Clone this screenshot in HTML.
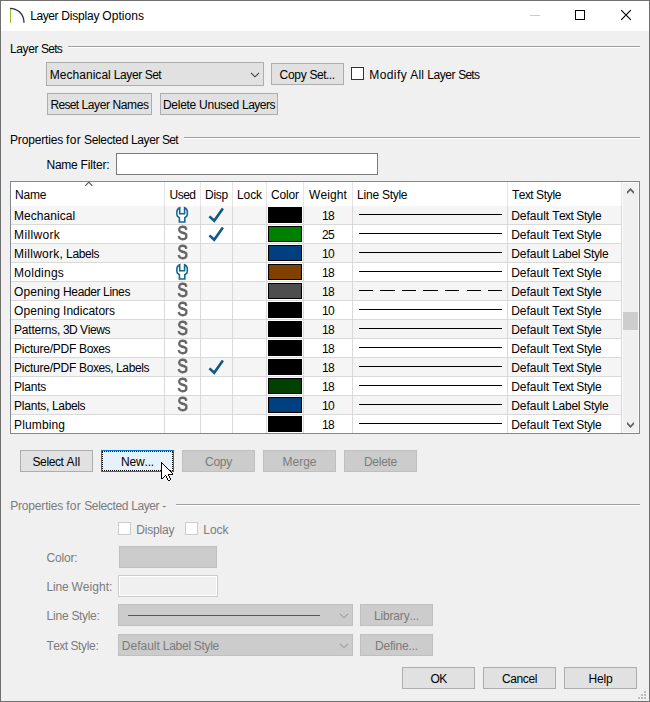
<!DOCTYPE html>
<html lang="en"><head><meta charset="utf-8"><title>Layer Display Options</title>
<style>
*{box-sizing:border-box;margin:0;padding:0}
html,body{width:650px;height:702px;overflow:hidden;background:#f0f0f0}
body{font-family:"Liberation Sans",sans-serif;font-size:12px;color:#000;line-height:15px;font-kerning:none}
#win{position:absolute;left:0;top:0;width:650px;height:702px;background:#f0f0f0;overflow:hidden}
#win>*{position:absolute}
#bt,#bb{left:0;width:650px;height:1px;background:#707070}
#bt{top:0}#bb{top:701px}
#bl,#br{top:0;width:1px;height:702px;background:#707070}
#bl{left:0}#br{left:649px}
#titlebar{left:0;top:0;width:650px;height:31px;background:#fff}
#titlebar>*{position:absolute}
.lbl{white-space:nowrap;height:15px;line-height:15px}
.dis{color:#7b7b7b}
.hr{height:1px;background:#a0a0a0;box-shadow:0 1px 0 #fff}
.btn{height:22px;background:#e1e1e1;border:1px solid #adadad;text-align:center;line-height:15px;padding-top:4px;white-space:nowrap}
.btn.d{background:#cccccc;border-color:#bfbfbf;color:#7b7b7b}
.btn.f{background:#e5f1fb;border-color:#0078d7}
.btn.f:after{content:"";position:absolute;left:0;top:0;right:0;bottom:0;border:1px dotted #000}
.combo{background:#e1e1e1;border:1px solid #adadad;line-height:15px;padding:5px 0 0 2.8px;white-space:nowrap}
.combo.d{background:#cccccc;border-color:#bfbfbf;color:#7b7b7b;padding-top:4px}
.combo .chev{position:absolute;right:3px;top:9px}
.combo.d .chev{top:8px}
.chk{width:13px;height:13px;background:#fff;border:1px solid #333}
.chk.d{border-color:#cccccc;background:#fff}
.inp{background:#fff;border:1px solid #7a7a7a}
.inp.d{border-color:#cccccc;background:#f0f0f0;box-shadow:inset 0 0 0 1px #fff}
#tbl{left:10px;top:181px;width:630px;height:253px;background:#fff;border:1px solid #828790;overflow:hidden}
#tbl>*{position:absolute}
.hdr{left:0;top:0;width:611px;height:24px;background:#fff}
.hdr>*{position:absolute}
.hc{top:0;height:24px;line-height:15px;padding-top:6px;border-right:1px solid #e5e5e5;white-space:nowrap;text-align:center}
.sortarrow{left:72.6px;top:-1px}
.row{left:0;width:611px;height:19px;background:#fff}
.row.alt{background:#f5f5f5}
.row>*{position:absolute}
.c{top:0;height:19px;line-height:15px;padding-top:3px;border-right:1px solid #d9d9d9;border-bottom:1px solid #d9d9d9;white-space:nowrap;overflow:hidden}
.c-name{left:0;width:154px}
.c-used{left:154px;width:36px;text-align:center}
.c-disp{left:190px;width:32px;text-align:center}
.c-lock{left:222px;width:34px;text-align:center}
.c-color{left:256px;width:37px}
.c-weight{left:293px;width:49px;text-align:center}
.c-ls{left:342px;width:155px}
.c-ts{left:497px;width:114px}
.c.c-name{padding-left:3.1px}
.c.c-ts{padding-left:3.2px}
.c.c-color{background:#fff}
.hc.c-name,.hc.c-ls,.hc.c-ts{text-align:left;padding-left:4.1px}
.c-color i{position:absolute;left:1px;top:1px;width:34px;height:16px;border:1px solid #000}
.c-ls b{position:absolute;left:6px;right:5px;top:8px;height:1px;background:#000}
.dsh{position:absolute;left:6px;top:8px}
.S{position:absolute;left:10.85px;top:0.25px;width:12px;text-align:center;font-size:20.4px;color:#626262;line-height:16px;transform:scaleX(0.775);-webkit-text-stroke:0.9px #626262;will-change:transform}
.wr{position:absolute;left:10px;top:0}
.ck{position:absolute;left:6px;top:0}
#sb{left:611px;top:0;width:17px;height:251px;background:#f0f0f0;box-shadow:inset 0 0 0 1px #fbfbfb}
#sb>*{position:absolute}
</style></head>
<body>
<div id="win">
<div id="titlebar">
<svg style="left:8px;top:6px" width="18" height="18" viewBox="0 0 18 18"><path d="M2 2.3 C9 2.3 16 7.6 16 16.8" fill="none" stroke="#303030" stroke-width="1.35"/><rect x="2" y="3" width="1" height="14" fill="#8fc231"/></svg>
<div class="lbl" style="left:30.2px;top:9px;letter-spacing:0;word-spacing:-0.334px"><span style="letter-spacing:-0.404px">Layer</span> <span style="letter-spacing:-0.192px">Display</span> <span style="letter-spacing:0.092px">Options</span></div>
<div style="left:530px;top:15px;width:10px;height:1px;background:#cccccc"></div>
<div style="left:575px;top:10px;width:10px;height:10px;border:1px solid #000"></div>
<svg style="left:620px;top:9px" width="12" height="12" viewBox="0 0 12 12"><path d="M1.15 1.15 L10.85 10.85 M10.85 1.15 L1.15 10.85" fill="none" stroke="#000" stroke-width="1.15"/></svg>
</div>
<div class="lbl" style="left:10px;top:42px;letter-spacing:0;word-spacing:-0.334px"><span style="letter-spacing:-0.404px">Layer</span> <span style="letter-spacing:-0.753px">Sets</span></div>
<div class="hr" style="left:68px;top:46px;width:572px"></div>
<div class="combo" style="left:46px;top:62px;width:218px;height:24px"><span style="letter-spacing:0;word-spacing:-0.334px"><span style="letter-spacing:0.030px">Mechanical</span> <span style="letter-spacing:-0.404px">Layer</span> <span style="letter-spacing:-0.671px">Set</span></span><svg class="chev" width="10" height="6" viewBox="0 0 10 6"><path d="M1 0.8 L5 4.8 L9 0.8" fill="none" stroke="#404040" stroke-width="1.15"/></svg></div>
<div class="btn" style="left:271px;top:63px;width:73px;padding-right:1.0px;letter-spacing:0;word-spacing:-0.334px"><span style="letter-spacing:-0.253px">Copy</span> <span style="letter-spacing:-0.502px">Set...</span></div>
<div class="chk" style="left:351px;top:67px"></div>
<div class="lbl" style="left:369.2px;top:68px;letter-spacing:0;word-spacing:-0.334px"><span style="letter-spacing:0.443px">Modify</span> <span style="letter-spacing:0.221px">All</span> <span style="letter-spacing:-0.404px">Layer</span> <span style="letter-spacing:-0.753px">Sets</span></div>
<div class="btn" style="left:47px;top:93px;width:105px;letter-spacing:0;word-spacing:-0.334px"><span style="letter-spacing:-0.670px">Reset</span> <span style="letter-spacing:-0.404px">Layer</span> <span style="letter-spacing:-0.402px">Names</span></div>
<div class="btn" style="left:160px;top:93px;width:118px;letter-spacing:0;word-spacing:-0.334px"><span style="letter-spacing:-0.281px">Delete</span> <span style="letter-spacing:-0.227px">Unused</span> <span style="letter-spacing:-0.503px">Layers</span></div>
<div class="lbl" style="left:10px;top:133px;letter-spacing:0;word-spacing:-0.334px"><span style="letter-spacing:-0.169px">Properties</span> <span style="letter-spacing:0.332px">for</span> <span style="letter-spacing:-0.337px">Selected</span> <span style="letter-spacing:-0.404px">Layer</span> <span style="letter-spacing:-0.671px">Set</span></div>
<div class="hr" style="left:184px;top:137px;width:456px"></div>
<div class="lbl" style="left:46.5px;top:158px;letter-spacing:0;word-spacing:-0.334px"><span style="letter-spacing:-0.252px">Name</span> <span style="letter-spacing:-0.143px">Filter:</span></div>
<div class="inp" style="left:116px;top:153px;width:262px;height:22px"></div>
<div id="tbl">
<div class="hdr"><div class="hc c-name"><span style="letter-spacing:-0.252px">Name</span></div><div class="hc c-used"><span style="letter-spacing:-0.503px">Used</span></div><div class="hc c-disp"><span style="letter-spacing:-0.251px">Disp</span></div><div class="hc c-lock"><span style="letter-spacing:-0.087px">Lock</span></div><div class="hc c-color"><span style="letter-spacing:-0.135px">Color</span></div><div class="hc c-weight"><span style="letter-spacing:0.109px">Weight</span></div><div class="hc c-ls"><span style="letter-spacing:0;word-spacing:-0.334px"><span style="letter-spacing:-0.172px">Line</span> <span style="letter-spacing:-0.336px">Style</span></span></div><div class="hc c-ts"><span style="letter-spacing:0;word-spacing:-0.334px"><span style="letter-spacing:-0.584px">Text</span> <span style="letter-spacing:-0.336px">Style</span></span></div><svg class="sortarrow" width="10" height="6" viewBox="0 0 10 6"><path d="M1.3 4.8 L4.8 1.1 L8.3 4.8" fill="none" stroke="#505050" stroke-width="1.05"/></svg></div>
<div class="row alt" style="top:24px"><div class="c c-name"><span style="letter-spacing:0.030px">Mechanical</span></div><div class="c c-used"><svg class="wr" width="14" height="18" viewBox="0 0 14 18"><path d="M4.7 1.7 C2.8 2.6 1.9 4 1.9 5.6 V8.8 C1.9 10 2.9 10.9 4.4 11.8 V16 H9.8 V11.8 C11.3 10.9 12.3 10 12.3 8.8 V5.6 C12.3 4 11.5 2.6 9.6 1.7 V7.8 H4.7 Z" fill="#fff" stroke="#17678f" stroke-width="1.6" stroke-linejoin="miter"/></svg></div><div class="c c-disp"><svg class="ck" width="18" height="18" viewBox="0 0 18 18"><path d="M2.4 10.4 L7.2 14.7 L15.9 2.4" fill="none" stroke="#0f5982" stroke-width="2.6"/></svg></div><div class="c c-lock"></div><div class="c c-color"><i style="background:#000000"></i></div><div class="c c-weight"><span style="letter-spacing:-0.674px">18</span></div><div class="c c-ls"><b class="solid"></b></div><div class="c c-ts"><span style="letter-spacing:0;word-spacing:-0.334px"><span style="letter-spacing:-0.003px">Default</span> <span style="letter-spacing:-0.584px">Text</span> <span style="letter-spacing:-0.336px">Style</span></span></div></div>
<div class="row" style="top:43px"><div class="c c-name"><span style="letter-spacing:0.334px">Millwork</span></div><div class="c c-used"><span class="S">S</span></div><div class="c c-disp"><svg class="ck" width="18" height="18" viewBox="0 0 18 18"><path d="M2.4 10.4 L7.2 14.7 L15.9 2.4" fill="none" stroke="#0f5982" stroke-width="2.6"/></svg></div><div class="c c-lock"></div><div class="c c-color"><i style="background:#008000"></i></div><div class="c c-weight"><span style="letter-spacing:-0.674px">25</span></div><div class="c c-ls"><b class="solid"></b></div><div class="c c-ts"><span style="letter-spacing:0;word-spacing:-0.334px"><span style="letter-spacing:-0.003px">Default</span> <span style="letter-spacing:-0.584px">Text</span> <span style="letter-spacing:-0.336px">Style</span></span></div></div>
<div class="row alt" style="top:62px"><div class="c c-name"><span style="letter-spacing:0;word-spacing:-0.334px"><span style="letter-spacing:0.260px">Millwork,</span> <span style="letter-spacing:-0.394px">Labels</span></span></div><div class="c c-used"><span class="S">S</span></div><div class="c c-disp"></div><div class="c c-lock"></div><div class="c c-color"><i style="background:#004080"></i></div><div class="c c-weight"><span style="letter-spacing:-0.674px">10</span></div><div class="c c-ls"><b class="solid"></b></div><div class="c c-ts"><span style="letter-spacing:0;word-spacing:-0.334px"><span style="letter-spacing:-0.003px">Default</span> <span style="letter-spacing:-0.272px">Label</span> <span style="letter-spacing:-0.336px">Style</span></span></div></div>
<div class="row" style="top:81px"><div class="c c-name"><span style="letter-spacing:0.247px">Moldings</span></div><div class="c c-used"><svg class="wr" width="14" height="18" viewBox="0 0 14 18"><path d="M4.7 1.7 C2.8 2.6 1.9 4 1.9 5.6 V8.8 C1.9 10 2.9 10.9 4.4 11.8 V16 H9.8 V11.8 C11.3 10.9 12.3 10 12.3 8.8 V5.6 C12.3 4 11.5 2.6 9.6 1.7 V7.8 H4.7 Z" fill="#fff" stroke="#17678f" stroke-width="1.6" stroke-linejoin="miter"/></svg></div><div class="c c-disp"></div><div class="c c-lock"></div><div class="c c-color"><i style="background:#804000"></i></div><div class="c c-weight"><span style="letter-spacing:-0.674px">18</span></div><div class="c c-ls"><b class="solid"></b></div><div class="c c-ts"><span style="letter-spacing:0;word-spacing:-0.334px"><span style="letter-spacing:-0.003px">Default</span> <span style="letter-spacing:-0.584px">Text</span> <span style="letter-spacing:-0.336px">Style</span></span></div></div>
<div class="row alt" style="top:100px"><div class="c c-name"><span style="letter-spacing:0;word-spacing:-0.334px"><span style="letter-spacing:0.090px">Opening</span> <span style="letter-spacing:-0.393px">Header</span> <span style="letter-spacing:-0.338px">Lines</span></span></div><div class="c c-used"><span class="S">S</span></div><div class="c c-disp"></div><div class="c c-lock"></div><div class="c c-color"><i style="background:#4d4d4d"></i></div><div class="c c-weight"><span style="letter-spacing:-0.674px">18</span></div><div class="c c-ls"><svg class="dsh" width="143" height="1" viewBox="0 0 143 1" fill="#000"><rect x="0" y="0" width="14" height="1"/><rect x="21" y="0" width="15" height="1"/><rect x="43" y="0" width="14" height="1"/><rect x="64" y="0" width="15" height="1"/><rect x="86" y="0" width="14" height="1"/><rect x="108" y="0" width="14" height="1"/><rect x="129" y="0" width="14" height="1"/></svg></div><div class="c c-ts"><span style="letter-spacing:0;word-spacing:-0.334px"><span style="letter-spacing:-0.003px">Default</span> <span style="letter-spacing:-0.584px">Text</span> <span style="letter-spacing:-0.336px">Style</span></span></div></div>
<div class="row" style="top:119px"><div class="c c-name"><span style="letter-spacing:0;word-spacing:-0.334px"><span style="letter-spacing:0.090px">Opening</span> <span style="letter-spacing:-0.003px">Indicators</span></span></div><div class="c c-used"><span class="S">S</span></div><div class="c c-disp"></div><div class="c c-lock"></div><div class="c c-color"><i style="background:#000000"></i></div><div class="c c-weight"><span style="letter-spacing:-0.674px">10</span></div><div class="c c-ls"><b class="solid"></b></div><div class="c c-ts"><span style="letter-spacing:0;word-spacing:-0.334px"><span style="letter-spacing:-0.003px">Default</span> <span style="letter-spacing:-0.584px">Text</span> <span style="letter-spacing:-0.336px">Style</span></span></div></div>
<div class="row alt" style="top:138px"><div class="c c-name"><span style="letter-spacing:0;word-spacing:-0.334px"><span style="letter-spacing:-0.225px">Patterns,</span> <span style="letter-spacing:-0.670px">3D</span> <span style="letter-spacing:-0.402px">Views</span></span></div><div class="c c-used"><span class="S">S</span></div><div class="c c-disp"></div><div class="c c-lock"></div><div class="c c-color"><i style="background:#000000"></i></div><div class="c c-weight"><span style="letter-spacing:-0.674px">18</span></div><div class="c c-ls"><b class="solid"></b></div><div class="c c-ts"><span style="letter-spacing:0;word-spacing:-0.334px"><span style="letter-spacing:-0.003px">Default</span> <span style="letter-spacing:-0.584px">Text</span> <span style="letter-spacing:-0.336px">Style</span></span></div></div>
<div class="row" style="top:157px"><div class="c c-name"><span style="letter-spacing:0;word-spacing:-0.334px"><span style="letter-spacing:-0.244px">Picture/PDF</span> <span style="letter-spacing:-0.470px">Boxes</span></span></div><div class="c c-used"><span class="S">S</span></div><div class="c c-disp"></div><div class="c c-lock"></div><div class="c c-color"><i style="background:#000000"></i></div><div class="c c-weight"><span style="letter-spacing:-0.674px">18</span></div><div class="c c-ls"><b class="solid"></b></div><div class="c c-ts"><span style="letter-spacing:0;word-spacing:-0.334px"><span style="letter-spacing:-0.003px">Default</span> <span style="letter-spacing:-0.584px">Text</span> <span style="letter-spacing:-0.336px">Style</span></span></div></div>
<div class="row alt" style="top:176px"><div class="c c-name"><span style="letter-spacing:0;word-spacing:-0.334px"><span style="letter-spacing:-0.244px">Picture/PDF</span> <span style="letter-spacing:-0.448px">Boxes,</span> <span style="letter-spacing:-0.394px">Labels</span></span></div><div class="c c-used"><span class="S">S</span></div><div class="c c-disp"><svg class="ck" width="18" height="18" viewBox="0 0 18 18"><path d="M2.4 10.4 L7.2 14.7 L15.9 2.4" fill="none" stroke="#0f5982" stroke-width="2.6"/></svg></div><div class="c c-lock"></div><div class="c c-color"><i style="background:#000000"></i></div><div class="c c-weight"><span style="letter-spacing:-0.674px">18</span></div><div class="c c-ls"><b class="solid"></b></div><div class="c c-ts"><span style="letter-spacing:0;word-spacing:-0.334px"><span style="letter-spacing:-0.003px">Default</span> <span style="letter-spacing:-0.584px">Text</span> <span style="letter-spacing:-0.336px">Style</span></span></div></div>
<div class="row" style="top:195px"><div class="c c-name"><span style="letter-spacing:-0.225px">Plants</span></div><div class="c c-used"><span class="S">S</span></div><div class="c c-disp"></div><div class="c c-lock"></div><div class="c c-color"><i style="background:#004000"></i></div><div class="c c-weight"><span style="letter-spacing:-0.674px">18</span></div><div class="c c-ls"><b class="solid"></b></div><div class="c c-ts"><span style="letter-spacing:0;word-spacing:-0.334px"><span style="letter-spacing:-0.003px">Default</span> <span style="letter-spacing:-0.584px">Text</span> <span style="letter-spacing:-0.336px">Style</span></span></div></div>
<div class="row alt" style="top:214px"><div class="c c-name"><span style="letter-spacing:0;word-spacing:-0.334px"><span style="letter-spacing:-0.241px">Plants,</span> <span style="letter-spacing:-0.394px">Labels</span></span></div><div class="c c-used"><span class="S">S</span></div><div class="c c-disp"></div><div class="c c-lock"></div><div class="c c-color"><i style="background:#004080"></i></div><div class="c c-weight"><span style="letter-spacing:-0.674px">10</span></div><div class="c c-ls"><b class="solid"></b></div><div class="c c-ts"><span style="letter-spacing:0;word-spacing:-0.334px"><span style="letter-spacing:-0.003px">Default</span> <span style="letter-spacing:-0.272px">Label</span> <span style="letter-spacing:-0.336px">Style</span></span></div></div>
<div class="row" style="top:233px"><div class="c c-name"><span style="letter-spacing:0.122px">Plumbing</span></div><div class="c c-used"></div><div class="c c-disp"></div><div class="c c-lock"></div><div class="c c-color"><i style="background:#000000"></i></div><div class="c c-weight"><span style="letter-spacing:-0.674px">18</span></div><div class="c c-ls"><b class="solid"></b></div><div class="c c-ts"><span style="letter-spacing:0;word-spacing:-0.334px"><span style="letter-spacing:-0.003px">Default</span> <span style="letter-spacing:-0.584px">Text</span> <span style="letter-spacing:-0.336px">Style</span></span></div></div>
<div id="sb">
<svg style="left:0;top:0" width="17" height="251" viewBox="0 0 17 251"><path d="M8.5 5.9 L12 9.4 V12 L8.5 8.5 L5 12 V9.4 Z M5 239.8 V242.3 L8.5 246 L12 242.3 V239.8 L8.5 243.5 Z" fill="#606060"/></svg>
<div style="left:1px;top:130px;width:15px;height:18px;background:#cdcdcd"></div>
</div>
</div>
<div class="btn" style="left:20px;top:450px;width:73px;letter-spacing:0;word-spacing:-0.334px"><span style="letter-spacing:-0.392px">Select</span> <span style="letter-spacing:0.221px">All</span></div>
<div class="btn f" style="left:101px;top:450px;width:73px;letter-spacing:-0.168px">New...</div>
<div class="btn d" style="left:182px;top:450px;width:73px;letter-spacing:-0.253px">Copy</div>
<div class="btn d" style="left:263px;top:450px;width:73px;letter-spacing:-0.003px">Merge</div>
<div class="btn d" style="left:344px;top:450px;width:73px;letter-spacing:-0.281px">Delete</div>
<div class="lbl dis" style="left:10.2px;top:499px;letter-spacing:0;word-spacing:-0.334px"><span style="letter-spacing:-0.169px">Properties</span> <span style="letter-spacing:0.332px">for</span> <span style="letter-spacing:-0.337px">Selected</span> <span style="letter-spacing:-0.404px">Layer</span> <span style="letter-spacing:1.004px">-</span></div>
<div class="hr" style="left:176px;top:504px;width:464px"></div>
<div class="chk d" style="left:118px;top:522px"></div>
<div class="lbl dis" style="left:136.3px;top:523px;letter-spacing:-0.192px">Display</div>
<div class="chk d" style="left:185px;top:522px"></div>
<div class="lbl dis" style="left:203.3px;top:523px;letter-spacing:-0.087px">Lock</div>
<div class="lbl dis" style="left:46.4px;top:551px;letter-spacing:-0.168px">Color:</div>
<div style="left:119px;top:546px;width:98px;height:22px;background:#cccccc;border:1px solid #bfbfbf"></div>
<div class="lbl dis" style="left:46.4px;top:580px;letter-spacing:0;word-spacing:-0.334px"><span style="letter-spacing:-0.172px">Line</span> <span style="letter-spacing:0.045px">Weight:</span></div>
<div class="inp d" style="left:118px;top:575px;width:100px;height:22px"></div>
<div class="lbl dis" style="left:46.4px;top:609px;letter-spacing:0;word-spacing:-0.334px"><span style="letter-spacing:-0.172px">Line</span> <span style="letter-spacing:-0.335px">Style:</span></div>
<div class="combo d" style="left:118px;top:604px;width:235px;height:22px"><div style="position:absolute;left:9px;top:10px;width:192px;height:1px;background:#555"></div><svg class="chev" width="10" height="6" viewBox="0 0 10 6"><path d="M1 0.8 L5 4.8 L9 0.8" fill="none" stroke="#9c9c9c" stroke-width="1.05"/></svg></div>
<div class="btn d" style="left:360px;top:604px;width:73px;letter-spacing:-0.168px">Library...</div>
<div class="lbl dis" style="left:46.4px;top:639px;letter-spacing:0;word-spacing:-0.334px"><span style="letter-spacing:-0.584px">Text</span> <span style="letter-spacing:-0.335px">Style:</span></div>
<div class="combo d" style="left:118px;top:634px;width:235px;height:22px"><span style="letter-spacing:0;word-spacing:-0.334px"><span style="letter-spacing:-0.003px">Default</span> <span style="letter-spacing:-0.272px">Label</span> <span style="letter-spacing:-0.336px">Style</span></span><svg class="chev" width="10" height="6" viewBox="0 0 10 6"><path d="M1 0.8 L5 4.8 L9 0.8" fill="none" stroke="#9c9c9c" stroke-width="1.05"/></svg></div>
<div class="btn d" style="left:360px;top:634px;width:73px;letter-spacing:-0.188px">Define...</div>
<div class="btn" style="left:402px;top:667px;width:73px;letter-spacing:-0.669px">OK</div>
<div class="btn" style="left:483px;top:667px;width:73px;letter-spacing:-0.392px">Cancel</div>
<div class="btn" style="left:564px;top:667px;width:73px;letter-spacing:-0.170px">Help</div>
<svg style="left:638px;top:691px" width="8" height="8" viewBox="0 0 8 8"><g fill="#bcbcbc"><rect x="6" y="0" width="2" height="2"/><rect x="3" y="3" width="2" height="2"/><rect x="6" y="3" width="2" height="2"/><rect x="0" y="6" width="2" height="2"/><rect x="3" y="6" width="2" height="2"/><rect x="6" y="6" width="2" height="2"/></g></svg>
<svg style="left:161px;top:462px" width="12" height="19" viewBox="0 0 12 19" shape-rendering="crispEdges"><path d="M1 2h1v1h-1zM1 3h2v1h-2zM1 4h3v1h-3zM1 5h4v1h-4zM1 6h5v1h-5zM1 7h6v1h-6zM1 8h7v1h-7zM1 9h8v1h-8zM1 10h9v1h-9zM1 11h10v1h-10zM1 12h6v1h-6zM1 13h3v1h-3zM5 13h2v1h-2zM1 14h2v1h-2zM6 14h2v1h-2zM1 15h1v1h-1zM6 15h2v1h-2zM7 16h2v1h-2zM7 17h2v1h-2z" fill="#fff"/><path d="M0 0h1v1h-1zM0 1h2v1h-2zM0 2h1v1h-1zM2 2h1v1h-1zM0 3h1v1h-1zM3 3h1v1h-1zM0 4h1v1h-1zM4 4h1v1h-1zM0 5h1v1h-1zM5 5h1v1h-1zM0 6h1v1h-1zM6 6h1v1h-1zM0 7h1v1h-1zM7 7h1v1h-1zM0 8h1v1h-1zM8 8h1v1h-1zM0 9h1v1h-1zM9 9h1v1h-1zM0 10h1v1h-1zM10 10h1v1h-1zM0 11h1v1h-1zM11 11h1v1h-1zM0 12h1v1h-1zM7 12h5v1h-5zM0 13h1v1h-1zM4 13h1v1h-1zM7 13h1v1h-1zM0 14h1v1h-1zM3 14h1v1h-1zM5 14h1v1h-1zM8 14h1v1h-1zM0 15h1v1h-1zM2 15h1v1h-1zM5 15h1v1h-1zM8 15h1v1h-1zM0 16h2v1h-2zM6 16h1v1h-1zM9 16h1v1h-1zM6 17h1v1h-1zM9 17h1v1h-1zM7 18h2v1h-2z" fill="#000"/></svg>
<div id="bt"></div><div id="bb"></div><div id="bl"></div><div id="br"></div>
</div>
</body></html>
